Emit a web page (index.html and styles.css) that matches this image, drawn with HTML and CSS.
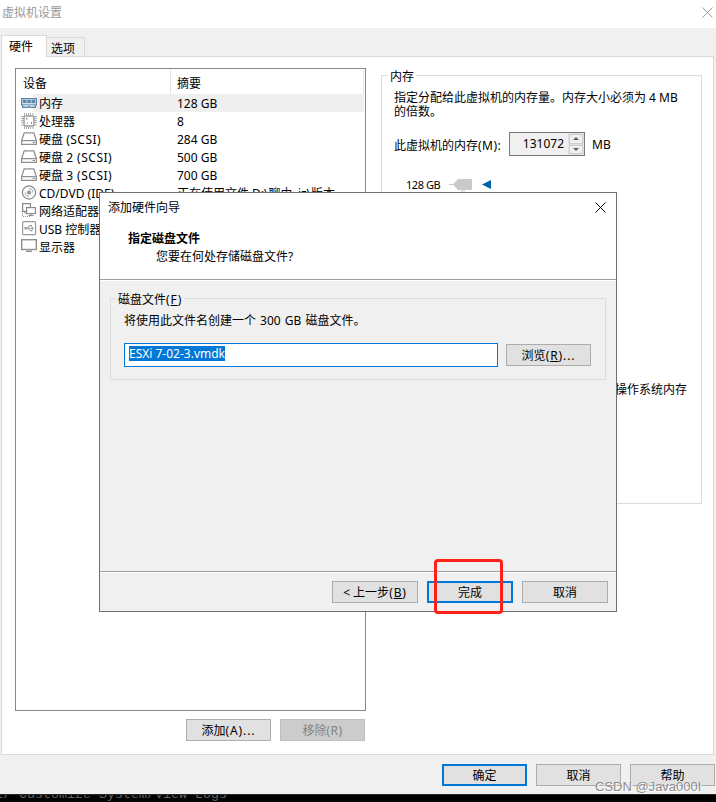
FILE: index.html
```html
<!DOCTYPE html>
<html lang="zh-CN">
<head>
<meta charset="utf-8">
<title>虚拟机设置</title>
<link rel="stylesheet" href="styles.css">
</head>
<body>
<div class="window">
  <header class="titlebar"><span>虚拟机设置</span>
    <svg class="close" width="11" height="11" viewBox="0 0 11 11"><path d="M.5.5l10 10M10.5.5l-10 10"/></svg>
  </header>
  <nav class="tabs"><div class="tab active">硬件</div><div class="tab">选项</div></nav>
  <main class="panel">
    <section class="left">
      <div class="list">
        <div class="row head"><span class="name">设备</span><span class="sum">摘要</span></div>
        <div class="row selected"><svg class="ico" viewBox="0 0 16 16"><path d="M.6 3.600h14.800v6.400h-1v2.400H9L8 11.400 7 12.400H1.600V10h-1z" fill="#cfdfeb" stroke="#5b86a5" stroke-width="1.200"/><path d="M2 5h3.500v3H2zM6.300 5h3.500v3H6.300zM10.600 5H14v3h-3.400z" fill="#5b86a5"/><path d="M2 9.700h12" stroke="#7fa3bd"/></svg><span class="name">内存</span><span class="sum">128 GB</span></div>
        <div class="row"><svg class="ico" viewBox="0 0 16 16"><path d="M3.500 0v16M5.500 0v16M7.500 0v16M9.500 0v16M12 0v16M0 3.500h16M0 5.500h16M0 7.500h16M0 9.500h16M0 12h16" stroke="#aaa"/><rect x="2.500" y="2.500" width="11" height="11" fill="#fff" stroke="#fff"/><rect x="3" y="3" width="10" height="10" rx="1" fill="#fff" stroke="#999" stroke-width="1.500"/><path d="M5 5h1.500v1.500H5zM10 9h1v2h-1zM6 9.500h1v1H6z" fill="#888"/></svg><span class="name">处理器</span><span class="sum">8</span></div>
        <div class="row"><svg class="ico" viewBox="0 0 16 16"><path d="M3.200 1.800h9.600l2.600 8v3.600H.6V9.800zM.6 9.600h14.800" fill="#fff" stroke="#909090" stroke-width="1.300"/><path d="M11.500 11.500H14" stroke="#909090"/></svg><span class="name">硬盘 <span class="lat">(SCSI)</span></span><span class="sum">284 GB</span></div>
        <div class="row"><svg class="ico" viewBox="0 0 16 16"><path d="M3.200 1.800h9.600l2.600 8v3.600H.6V9.800zM.6 9.600h14.800" fill="#fff" stroke="#909090" stroke-width="1.300"/><path d="M11.500 11.500H14" stroke="#909090"/></svg><span class="name">硬盘 <span class="lat">2 (SCSI)</span></span><span class="sum">500 GB</span></div>
        <div class="row"><svg class="ico" viewBox="0 0 16 16"><path d="M3.200 1.800h9.600l2.600 8v3.600H.6V9.800zM.6 9.600h14.800" fill="#fff" stroke="#909090" stroke-width="1.300"/><path d="M11.500 11.500H14" stroke="#909090"/></svg><span class="name">硬盘 <span class="lat">3 (SCSI)</span></span><span class="sum">700 GB</span></div>
        <div class="row"><svg class="ico" viewBox="0 0 16 16"><circle cx="8" cy="7.500" r="6.600" fill="#fff" stroke="#888" stroke-width="1.200"/><circle cx="8" cy="7.500" r="1.600" fill="#999" stroke="#888"/><path d="M8 3.500a4 4 0 0 1 4 4M8 11.500a4 4 0 0 1-4-4" fill="none" stroke="#aaa"/></svg><span class="name">CD/DVD (IDE)</span><span class="sum">正在使用文件 D:\聊由_jz\版本</span></div>
        <div class="row"><svg class="ico" viewBox="0 0 16 16"><path d="M5 8.400H1.600V.6h7.800V4M4 9v1.500" fill="none" stroke="#8a8a8a" stroke-width="1.200"/><rect x="5.600" y="4.600" width="8.800" height="6" fill="#fff" stroke="#8a8a8a" stroke-width="1.200"/><path d="M10 11v2M7.500 12.500h5" stroke="#8a8a8a"/><path d="M1.500 10v4M2 13.500h8" fill="none" stroke="#999" stroke-dasharray="1 1"/></svg><span class="name">网络适配器</span></div>
        <div class="row"><svg class="ico" viewBox="0 0 16 16"><rect x="1.600" y=".6" width="13" height="13" rx="1.200" fill="#fff" stroke="#999" stroke-width="1.200"/><path d="M4 7.200h8M6 7.200l2-2.400h2M7 7.200l2 2.400h2" fill="none" stroke="#999"/><path d="M3.500 6h2v2.400h-2zM9.500 4h1.500v1.500H9.500zM10 8.800h1.500v1.500H10zM11 5.700l2 1.500-2 1.500z" fill="#999"/></svg><span class="name">USB 控制器</span></div>
        <div class="row"><svg class="ico" viewBox="0 0 16 16"><rect x=".7" y=".7" width="14.600" height="9.800" fill="#fff" stroke="#909090" stroke-width="1.400"/><path d="M5 12.300h6" stroke="#909090" stroke-width="1.500"/></svg><span class="name">显示器</span></div>
      </div>
      <div class="actions"><button class="btn">添加<span class="wide">(A)...</span></button><button class="btn disabled">移除<span class="lat">(R)</span></button></div>
    </section>
    <section class="group memory">
      <h2 class="legend">内存</h2>
      <p class="desc">指定分配给此虚拟机的内存量。内存大小必须为 4 MB<br>的倍数。</p>
      <div class="amount"><span class="amount-label">此虚拟机的内存<span class="lat">(M):</span></span>
        <div class="spin"><span>131072</span><div class="arrows"><i><svg width="6" height="3"><path d="M3 0l3 3H0z"/></svg></i><i><svg width="6" height="3"><path d="M0 0h6L3 3z"/></svg></i></div></div><span class="unit">MB</span></div>
      <div class="scale"><span>128 GB</span><svg width="46" height="14" viewBox="0 0 46 14"><path d="M0 6.500h4" stroke="#c8c8c8"/><path d="M4 6.500l5-5.500h14v11H9z" fill="#c9c9c9"/><path d="M12 12h4v2h-4z" fill="#e2e2e2"/><path d="M33 6.500l9-4.500v9z" fill="#0062a8"/></svg></div>
      <p class="note">操作系统内存</p>
    </section>
  </main>
  <footer class="bottom"><button class="btn default">确定</button><button class="btn">取消</button><button class="btn">帮助</button></footer>
</div>
<div class="console"><span>1/ Customize System/View Logs</span></div>
<div class="dialog">
  <header class="dlg-head">
    <div class="dlg-title"><span>添加硬件向导</span><svg class="close" width="11" height="11" viewBox="0 0 11 11"><path d="M.5.5l10 10M10.5.5l-10 10"/></svg></div>
    <h1>指定磁盘文件</h1>
    <p>您要在何处存储磁盘文件?</p>
  </header>
  <div class="dlg-body">
    <section class="group file">
      <h2 class="legend">磁盘文件<span class="wide">(<u>F</u>)</span></h2>
      <p class="info">将使用此文件名创建一个 300 GB 磁盘文件。</p>
      <div class="file-row"><div class="field"><span>ESXi 7-02-3.vmdk</span></div><button class="btn">浏览<span class="wide">(<u>R</u>)...</span></button></div>
    </section>
  </div>
  <footer class="dlg-foot"><button class="btn">&lt; 上一步<span class="wide">(<u>B</u>)</span></button><button class="btn default">完成</button><button class="btn">取消</button></footer>
</div>
<div class="marker"></div>
<div class="watermark">CSDN @Java000I</div>
</body>
</html>
```

FILE: styles.css
```css
* { box-sizing: border-box; }
body {
  margin: 0;
  width: 716px;
  height: 802px;
  position: relative;
  overflow: hidden;
  background: #000;
  color: #000;
  font: 12px/18px "Noto Sans", "Noto Sans CJK SC", sans-serif;
}
p, h1, h2 { margin: 0; font-size: 12px; font-weight: normal; }
u { text-underline-offset: 1px; }
svg { display: block; flex: none; }
.lat { letter-spacing: .5px; }
.wide { letter-spacing: .9px; }
.window { height: 794px; background: #f0f0f0; display: flex; flex-direction: column; }
.titlebar {
  height: 28px;
  padding: 0 3px 3px 2px;
  display: flex;
  align-items: center;
  justify-content: space-between;
  background: #fff;
  color: #999;
}
.close path { stroke: #000; fill: none; }
.titlebar .close path { stroke: #999; }
.tabs { height: 28px; padding-left: 1px; display: flex; align-items: flex-end; }
.tab {
  width: 38px;
  height: 19px;
  padding: 2px 0 0 4px;
  border: 1px solid #d9d9d9;
  border-width: 1px 1px 0 0;
  background: #f0f0f0;
}
.tab.active {
  width: 46px;
  height: 22px;
  padding: 2px 0 0 7px;
  margin-bottom: -1px;
  border-left-width: 1px;
  background: #fff;
  position: relative;
}
.panel {
  width: 713px;
  height: 699px;
  margin-left: 1px;
  padding: 11px 11px 0 13px;
  display: flex;
  border: 1px solid #d9d9d9;
  background: #fff;
}
.left { width: 351px; margin-right: 15px; }
.list { height: 643px; padding: 1px; border: 1px solid #828790; }
.row { display: flex; height: 18px; padding-left: 4px; line-height: 20px; white-space: nowrap; }
.row .name { width: 140px; padding-left: 2px; }
.ico { width: 16px; height: 16px; margin-top: 1px; }
.row.head { height: 24px; line-height: 28px; border-right: 1px solid #e5e5e5; }
.row.head .name { width: 150px; border-right: 1px solid #e5e5e5; }
.row.head .sum { padding-left: 6px; }
.row.selected { background: linear-gradient(#efefef, #efefef) 16px 0 no-repeat; }
.actions { display: flex; justify-content: flex-end; gap: 9px; padding: 8px 1px 0 0; }
.btn {
  width: 85px;
  height: 22px;
  padding: 2px 0 0;
  border: 1px solid #adadad;
  background: #e1e1e1;
  color: #000;
  font: inherit;
  line-height: 18px;
  white-space: nowrap;
}
.btn.default { border: 2px solid #0078d7; padding: 2px 0 0; line-height: 16px; }
.btn.disabled { background: #ccc; border-color: #bfbfbf; color: #838383; }
.group { border: 1px solid #dcdcdc; }
.legend { width: max-content; padding: 0 2px; margin-top: -8px; line-height: 18px; }
.memory { width: 321px; height: 429px; margin-top: 7px; padding-left: 12px; }
.memory .legend { background: #fff; margin-left: -6px; }
.desc { margin-top: 5px; line-height: 14px; white-space: nowrap; }
.amount { display: flex; align-items: center; height: 24px; margin-top: 13px; }
.amount-label { width: 115px; padding-top: 3px; }
.unit { padding-top: 2px; }
.spin {
  width: 76px;
  height: 24px;
  margin-right: 7px;
  display: flex;
  justify-content: flex-end;
  border: 1px solid #7a7a7a;
  background: #f0f0f0;
  line-height: 21px;
}
.arrows { display: grid; width: 16px; margin-left: 4px; gap: 1px; padding: 1px; background: #e1e1e1; }
.arrows i { display: grid; place-items: center; border: 1px solid #cfcfcf; background: #f0f0f0; }
.arrows path { fill: #606060; }
.scale { display: flex; align-items: center; height: 18px; margin: 20px 0 0 12px; font-size: 11px; letter-spacing: -.45px; }
.scale svg { margin-left: 9px; }
.note { margin: 187px 0 0 221px; white-space: nowrap; }
.bottom { display: flex; gap: 9px; padding: 9px 0 0 442px; }
.console { height: 8px; overflow: hidden; background: #000; border-top: 1px solid #282828; }
.console span { display: block; margin: -9px 0 0 -5px; font: 13.33px/18px "Liberation Mono", monospace; color: #666; white-space: pre; }

.dialog {
  position: absolute;
  left: 99px;
  top: 192px;
  width: 518px;
  height: 420px;
  display: flex;
  flex-direction: column;
  border: 1px solid #707070;
  background: #f0f0f0;
}
.dlg-head { height: 88px; background: #fff; border-bottom: 1px solid #fff; box-shadow: inset 0 -1px #a0a0a0; }
.dlg-title { display: flex; align-items: center; justify-content: space-between; height: 28px; padding: 1px 10px 0 8px; }
.dlg-title .close { margin-top: -1px; }
.dlg-head h1 { margin: 9px 0 0 28px; font-weight: bold; }
.dlg-head p { margin-left: 56px; }
.dlg-body { height: 290px; padding: 17px 10px 0; }
.file { height: 82px; padding-left: 13px; }
.file .legend { background: #f0f0f0; margin-left: -8px; }
.info { margin-top: 3px; word-spacing: 1px; }
.file-row { display: flex; gap: 8px; align-items: center; margin-top: 13px; }
.field { width: 374px; height: 24px; padding: 2px 4px; border: 1px solid #0078d7; background: #fff; line-height: 15px; }
.field span { display: inline-block; height: 15px; background: #0078d7; color: #fff; }
.dlg-foot { flex: 1; display: flex; gap: 9px; justify-content: flex-end; padding: 9px 8px 0 0; border-top: 1px solid #a0a0a0; box-shadow: inset 0 1px #fff; }
.dlg-foot .btn { width: 86px; }
.marker { position: absolute; left: 434px; top: 559px; width: 69px; height: 55px; border: 3px solid #ff2116; border-radius: 4px; }
.watermark { position: absolute; left: 595px; top: 779px; font: 13px/16px "Liberation Sans", sans-serif; color: #8d8d8d; text-shadow: 1px 1px #fff; white-space: nowrap; }
```
